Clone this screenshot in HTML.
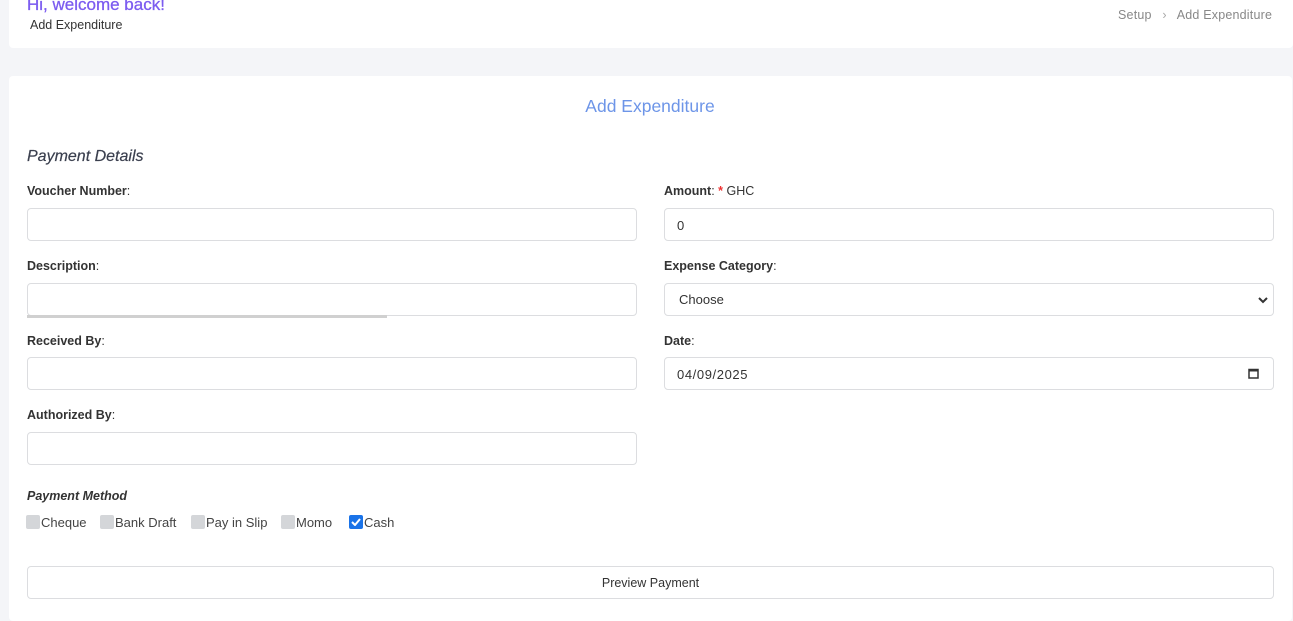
<!DOCTYPE html>
<html><head><style>
*{box-sizing:border-box;margin:0;padding:0}
body{width:1293px;height:611px;overflow:hidden;background:#f4f5f8;font-family:"Liberation Sans",sans-serif;position:relative;color:#333}
.card{position:absolute;background:#fff;border-radius:4px}
.a{position:absolute;white-space:nowrap}
.lbl{font-size:12.5px;font-weight:bold;color:#333}
.lbl span{font-weight:normal}
.inp{position:absolute;height:33px;border:1px solid #dcdde0;border-radius:4px;background:#fff;font-size:13px;color:#333;padding:0 0 0 12px;line-height:31px}
.cb{display:inline-block;width:14px;height:14px;background:#d4d6d9;border-radius:2px;vertical-align:-2px;margin-right:1px}
.pm{font-size:13px;color:#444}
</style></head><body>
<div class="card" style="left:9px;top:-5px;width:1284px;height:53px"></div>
<div class="a" style="left:27px;top:-5px;font-size:17px;color:#7c5cf0;-webkit-text-stroke:0.3px #7c5cf0">Hi, welcome back!</div>
<div class="a" style="left:30px;top:18px;font-size:12.5px;color:#333">Add Expenditure</div>
<div class="a" style="left:1118px;top:8px;font-size:12.5px;color:#888;letter-spacing:0.2px">Setup <span style="margin:0 7px;color:#aaa">›</span> Add Expenditure</div>

<div class="card" style="left:9px;top:76px;width:1283px;height:545px"></div>
<div class="a" style="left:0;width:1300px;text-align:center;top:96px;font-size:17.5px;color:#6d95e8">Add Expenditure</div>
<div class="a" style="left:27px;top:148px;font-size:16px;font-style:italic;color:#3a3f4e;-webkit-text-stroke:0.2px #3a3f4e">Payment Details</div>

<div class="a lbl" style="left:27px;top:184px">Voucher Number<span>:</span></div>
<div class="inp" style="left:27px;top:208px;width:610px"></div>
<div class="a lbl" style="left:664px;top:184px">Amount<span>: <b style="color:#e33">*</b> GHC</span></div>
<div class="inp" style="left:664px;top:208px;width:610px;line-height:33px">0</div>

<div class="a lbl" style="left:27px;top:259px">Description<span>:</span></div>
<div class="inp" style="left:27px;top:283px;width:610px"></div>
<div class="a" style="left:27px;top:315px;width:360px;height:3px;background:#d0d0d0"></div>
<div class="a lbl" style="left:664px;top:259px">Expense Category<span>:</span></div>
<div class="inp" style="left:664px;top:283px;width:610px;padding-left:14px">Choose<svg style="position:absolute;right:5px;top:12px" width="10" height="8" viewBox="0 0 10 8"><path d="M1 2l4 4 4-4" stroke="#333" stroke-width="2" fill="none"/></svg></div>

<div class="a lbl" style="left:27px;top:334px">Received By<span>:</span></div>
<div class="inp" style="left:27px;top:357px;width:610px"></div>
<div class="a lbl" style="left:664px;top:334px">Date<span>:</span></div>
<div class="inp" style="left:664px;top:357px;width:610px;line-height:33px;letter-spacing:0.6px">04/09/2025<svg style="position:absolute;right:14px;top:10px" width="11" height="11" viewBox="0 0 11 11"><rect x="1" y="1.5" width="9" height="8.5" stroke="#333" stroke-width="1.5" fill="none"/><rect x="1" y="1" width="9" height="2.5" fill="#333"/></svg></div>

<div class="a lbl" style="left:27px;top:408px">Authorized By<span>:</span></div>
<div class="inp" style="left:27px;top:432px;width:610px"></div>

<div class="a" style="left:27px;top:489px;font-size:12.5px;font-weight:bold;font-style:italic;color:#333">Payment Method</div>
<div class="a pm" style="left:26px;top:515px"><span class="cb"></span>Cheque</div>
<div class="a pm" style="left:100px;top:515px"><span class="cb"></span>Bank Draft</div>
<div class="a pm" style="left:191px;top:515px"><span class="cb"></span>Pay in Slip</div>
<div class="a pm" style="left:281px;top:515px"><span class="cb"></span>Momo</div>
<div class="a pm" style="left:349px;top:515px"><span class="cb" style="background:#1a73e8;position:relative"><svg style="position:absolute;left:2px;top:3px" width="10" height="8" viewBox="0 0 10 8"><path d="M1 4l3 3 5-6" stroke="#fff" stroke-width="2" fill="none"/></svg></span>Cash</div>

<div class="inp" style="left:27px;top:566px;width:1247px;text-align:center;padding:0;font-size:12.5px;line-height:33px">Preview Payment</div>
</body></html>
